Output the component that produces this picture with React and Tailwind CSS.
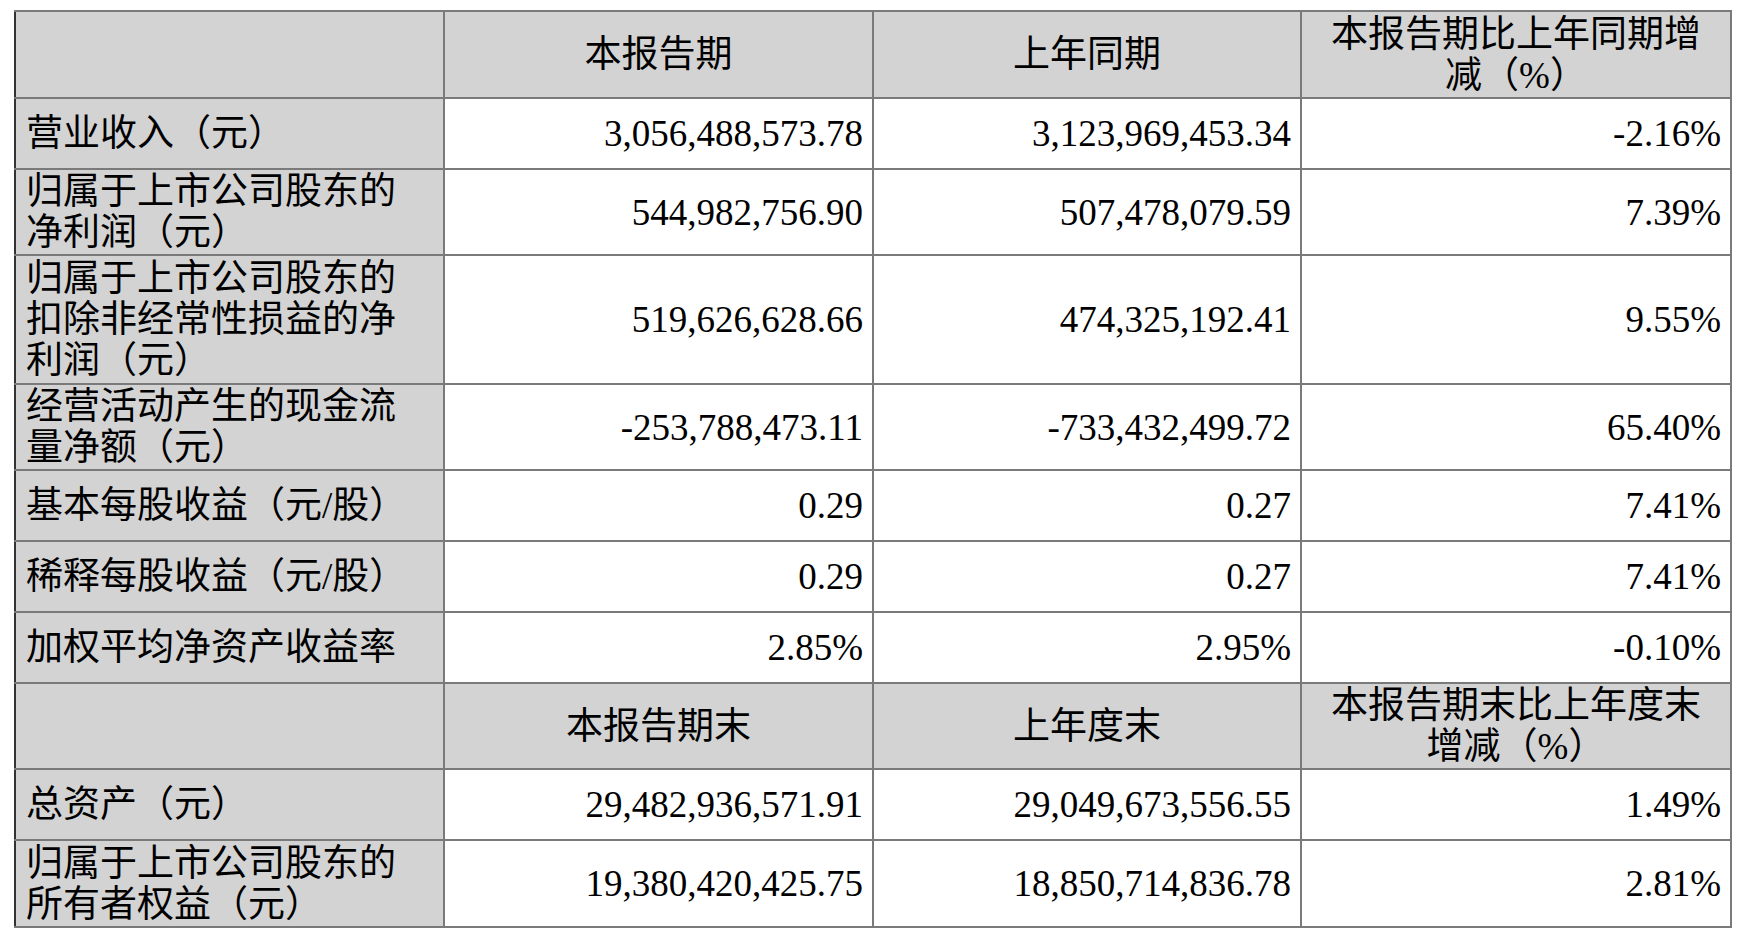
const rows = [
  { label: ["营业收入（元）"], h: "h-[71px]", v: ["3,056,488,573.78", "3,123,969,453.34", "-2.16%"] },
  { label: ["归属于上市公司股东的", "净利润（元）"], h: "h-[86px]", v: ["544,982,756.90", "507,478,079.59", "7.39%"] },
  { label: ["归属于上市公司股东的", "扣除非经常性损益的净", "利润（元）"], h: "h-[129px]", v: ["519,626,628.66", "474,325,192.41", "9.55%"] },
  { label: ["经营活动产生的现金流", "量净额（元）"], h: "h-[86px]", v: ["-253,788,473.11", "-733,432,499.72", "65.40%"] },
  { label: ["基本每股收益（元/股）"], h: "h-[71px]", v: ["0.29", "0.27", "7.41%"] },
  { label: ["稀释每股收益（元/股）"], h: "h-[71px]", v: ["0.29", "0.27", "7.41%"] },
  { label: ["加权平均净资产收益率"], h: "h-[71px]", v: ["2.85%", "2.95%", "-0.10%"] },
];

const rows2 = [
  { label: ["总资产（元）"], h: "h-[71px]", v: ["29,482,936,571.91", "29,049,673,556.55", "1.49%"] },
  { label: ["归属于上市公司股东的", "所有者权益（元）"], h: "h-[87px]", v: ["19,380,420,425.75", "18,850,714,836.78", "2.81%"] },
];

const cell = "border-2 border-[#7a7a7a] p-0 align-middle";

function Lines({ lines }) {
  return lines.map((l, i) => (
    <span key={i}>
      {l}
      {i < lines.length - 1 && <br />}
    </span>
  ));
}

function HeadRow({ cols, h }) {
  return (
    <tr className={h}>
      <td className={`${cell} bg-[#d3d3d3] border-l-[#333]`}></td>
      {cols.map((c, i) => (
        <td key={i} className={`${cell} bg-[#d3d3d3] text-center whitespace-nowrap`}>
          <Lines lines={c} />
        </td>
      ))}
    </tr>
  );
}

function DataRow({ r }) {
  return (
    <tr className={r.h}>
      <td className={`${cell} bg-[#d3d3d3] border-l-[#333] pl-[10px] whitespace-nowrap`}>
        <Lines lines={r.label} />
      </td>
      {r.v.map((x, i) => (
        <td key={i} className={`${cell} bg-white text-right pr-[9px] whitespace-nowrap`}>
          {x}
        </td>
      ))}
    </tr>
  );
}

export default function App() {
  return (
    <div className="min-h-screen bg-white pl-[14px] pt-[10px]">
      <table
        className="table-fixed border-collapse text-black text-[37px] leading-[41px]"
        style={{ fontFamily: '"Liberation Serif", "Noto Sans CJK SC", serif' }}
      >
        <colgroup>
          <col className="w-[429px]" />
          <col className="w-[429px]" />
          <col className="w-[428px]" />
          <col className="w-[430px]" />
        </colgroup>
        <tbody>
          <HeadRow
            h="h-[87px]"
            cols={[["本报告期"], ["上年同期"], ["本报告期比上年同期增", "减（%）"]]}
          />
          {rows.map((r, i) => (
            <DataRow key={i} r={r} />
          ))}
          <HeadRow
            h="h-[86px]"
            cols={[["本报告期末"], ["上年度末"], ["本报告期末比上年度末", "增减（%）"]]}
          />
          {rows2.map((r, i) => (
            <DataRow key={i} r={r} />
          ))}
        </tbody>
      </table>
    </div>
  );
}
